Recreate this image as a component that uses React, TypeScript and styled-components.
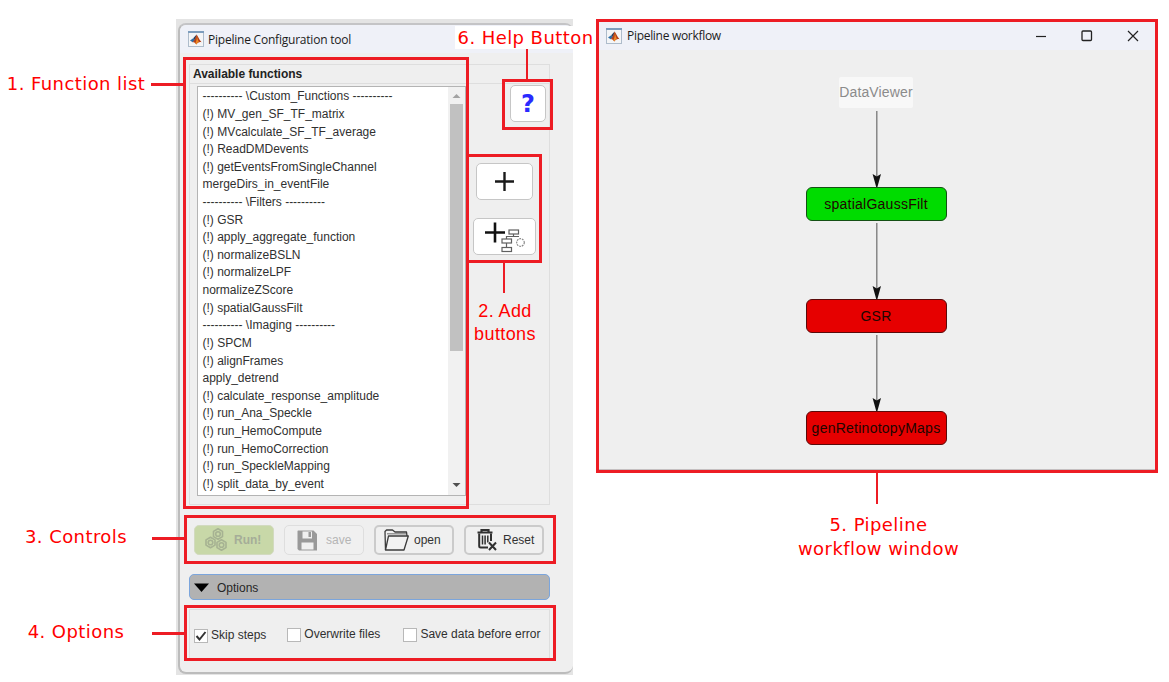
import React from "react";
import styled, { createGlobalStyle } from "styled-components";

const GlobalStyle = createGlobalStyle`
  * { box-sizing: border-box; }
  body { margin: 0; background: #fff; overflow: hidden; }
`;

const sans = `"Liberation Sans", Arial, sans-serif`;
const ui = `"Open Sans", "Noto Sans", sans-serif`;
const wide = `"DejaVu Sans", Verdana, sans-serif`;
const red = "#ed1c24";

const Desktop = styled.main`
  position: relative;
  width: 1169px;
  height: 682px;
  background: #fff;
  overflow: hidden;
  font-family: ${sans};
  color: #303030;
`;

const ToolBackdrop = styled.div`
  position: absolute;
  left: 176px;
  top: 19px;
  width: 397px;
  height: 656px;
  background: #e4e4e4;
  overflow: hidden;
  padding: 4px 0 1px 2px;
`;

const ToolWindow = styled.section`
  width: 395px;
  height: 651px;
  border: 2px solid #bcbcbc;
  border-right-width: 0;
  border-top-color: #c4c4c6;
  border-radius: 8px;
  background: #efefef;
  overflow: hidden;
`;

const TitleBar = styled.header<{ $height: number; $pad: number }>`
  display: flex;
  align-items: center;
  height: ${(p) => p.$height}px;
  padding-left: ${(p) => p.$pad}px;
  background: #eff1f8;
  font: 12px/16px ${ui};
  color: #1c1c1c;
`;

const TitleText = styled.span<{ $spacing: number; $gap: number }>`
  margin-left: ${(p) => p.$gap}px;
  padding-top: 1px;
  white-space: nowrap;
  letter-spacing: ${(p) => p.$spacing}px;
`;

const ToolBody = styled.div`
  display: flex;
  flex-direction: column;
  padding: 11px 0 0 9px;
`;

const FunctionPanel = styled.div`
  display: flex;
  flex-direction: column;
  width: 361px;
  height: 441px;
  border: 1px solid #dedede;
`;

const PanelTitle = styled.h2`
  margin: 0;
  height: 19px;
  padding-left: 3px;
  border-bottom: 1px solid #dedede;
  font: bold 12px/18px ${sans};
  letter-spacing: -0.02px;
  color: #222;
`;

const PanelBody = styled.div`
  display: flex;
  padding: 2px 0 0 7px;
`;

const ListBox = styled.div`
  display: flex;
  width: 269px;
  height: 410px;
  border: 1px solid #b4b4b4;
  background: #fff;
`;

const FunctionItems = styled.ul`
  flex: 1;
  margin: 0;
  padding: 1.4px 0 0 4.5px;
  list-style: none;
  overflow: hidden;
`;

const FunctionItem = styled.li`
  height: 17.62px;
  font-size: 12px;
  line-height: 17.62px;
  white-space: nowrap;
`;

const ScrollTrack = styled.div`
  display: flex;
  flex-direction: column;
  align-items: center;
  width: 17px;
  background: #f1f1f1;
`;

const ScrollArrow = styled.svg`
  display: block;
  width: 17px;
  height: 17px;
`;

const ScrollThumb = styled.div`
  width: 13px;
  height: 247px;
  margin-bottom: auto;
  background: #c1c1c1;
`;

const SideColumn = styled.div`
  display: flex;
  flex-direction: column;
  width: 82px;
  align-items: flex-start;
`;

const IconButton = styled.button<{ $w: number; $h: number; $left: number; $top?: number }>`
  display: flex;
  align-items: center;
  justify-content: center;
  width: ${(p) => p.$w}px;
  height: ${(p) => p.$h}px;
  margin: ${(p) => p.$top ?? 0}px 0 0 ${(p) => p.$left}px;
  padding: 0;
  border: 1.5px solid #c6c6c6;
  border-radius: 5px;
  background: #fff;
`;

const HelpMark = styled.span`
  font: 600 25px/30px ${wide};
  font-size: 24px;
  color: #2a2aff;
`;

const Controls = styled.div`
  display: flex;
  gap: 10px;
  margin-top: 20px;
  padding-left: 5px;
`;

const ControlButton = styled.button<{ $tone?: "run" | "off"; $gap: number; $pad: number }>`
  display: flex;
  align-items: center;
  gap: ${(p) => p.$gap}px;
  width: 80px;
  height: 30px;
  padding: 0 0 0 ${(p) => p.$pad}px;
  border: ${(p) => (p.$tone === "off" ? "1.5px solid #dedede" : p.$tone === "run" ? "1px solid #d2dabf" : "2px solid #cbcbcb")};
  border-radius: 5px;
  background: ${(p) => (p.$tone === "run" ? "#c8d8a8" : "#f0f0f0")};
  color: ${(p) => (p.$tone === "run" ? "#a5ad98" : p.$tone === "off" ? "#b5b5b5" : "#333")};
  font: ${(p) => (p.$tone === "run" ? "bold" : "normal")} 12px/16px ${sans};
  white-space: nowrap;
  svg { display: block; flex: none; }
`;

const OptionsHeader = styled.button`
  display: flex;
  align-items: center;
  gap: 8px;
  width: 361px;
  height: 26px;
  margin-top: 19px;
  padding: 1px 0 0 4px;
  border: 1.5px solid #7ba5dc;
  border-radius: 5px;
  background: #b2b2b2;
  font: 12px/16px ${sans};
  color: #262626;
`;

const OptionsPanel = styled.div`
  display: flex;
  align-items: center;
  width: 361px;
  height: 51px;
  margin-top: 9px;
  padding-left: 4px;
  border: 1px solid #dedede;
`;

const Option = styled.label<{ $left?: number; $drop?: number }>`
  display: flex;
  align-items: center;
  gap: 3px;
  margin-left: ${(p) => p.$left ?? 0}px;
  padding-top: ${(p) => p.$drop ?? 0}px;
  font-size: 12px;
  line-height: 15px;
  white-space: nowrap;
`;

const Box = styled.span`
  display: flex;
  align-items: center;
  justify-content: center;
  width: 14px;
  height: 14px;
  border: 1px solid #b8b8b8;
  background: #fff;
`;

const WorkflowWindow = styled.section`
  position: absolute;
  left: 598px;
  top: 21px;
  width: 558px;
  height: 450px;
  background: #efefef;
  border-bottom: 2px solid #c4bfc0;
`;

const WindowButtons = styled.div`
  display: flex;
  gap: 34px;
  margin-left: auto;
  padding-right: 17px;
`;

const Diagram = styled.div`
  display: flex;
  flex-direction: column;
  align-items: center;
  padding: 27px 2px 0 0;
`;

const Source = styled.div`
  width: 74px;
  height: 31px;
  margin-bottom: 3px;
  border-radius: 2px;
  background: #f8f8f8;
  color: #8b8b8b;
  text-align: center;
  font-size: 14px;
  line-height: 31px;
  letter-spacing: 0.15px;
`;

const Node = styled.div<{ $color: string; $ink: string }>`
  width: 141px;
  height: 34px;
  margin-bottom: 2px;
  border: 1px solid ${(p) => p.$ink};
  border-radius: 6px;
  background: ${(p) => p.$color};
  color: #200600;
  text-align: center;
  font-size: 14px;
  line-height: 33px;
  letter-spacing: 0.25px;
`;

const Frame = styled.div<{ $x: number; $y: number; $w: number; $h: number }>`
  position: absolute;
  left: ${(p) => p.$x}px;
  top: ${(p) => p.$y}px;
  width: ${(p) => p.$w}px;
  height: ${(p) => p.$h}px;
  border: 3px solid ${red};
`;

const Leader = styled.div<{ $x: number; $y: number; $w: number; $h: number }>`
  position: absolute;
  left: ${(p) => p.$x}px;
  top: ${(p) => p.$y}px;
  width: ${(p) => p.$w}px;
  height: ${(p) => p.$h}px;
  background: ${red};
`;

const Note = styled.div<{ $x: number; $y: number; $w: number; $line?: number; $plain?: boolean; $fill?: boolean }>`
  position: absolute;
  left: ${(p) => p.$x}px;
  top: ${(p) => p.$y}px;
  width: ${(p) => p.$w}px;
  text-align: center;
  white-space: nowrap;
  color: #ff0000;
  background: ${(p) => (p.$fill ? "#fff" : "transparent")};
  font: 18px/${(p) => p.$line ?? 22}px ${(p) => (p.$plain ? sans : wide)};
  letter-spacing: ${(p) => (p.$plain ? 0.4 : 0.43)}px;
`;

const functions = [
  "---------- \\Custom_Functions ----------",
  "(!) MV_gen_SF_TF_matrix",
  "(!) MVcalculate_SF_TF_average",
  "(!) ReadDMDevents",
  "(!) getEventsFromSingleChannel",
  "mergeDirs_in_eventFile",
  "---------- \\Filters ----------",
  "(!) GSR",
  "(!) apply_aggregate_function",
  "(!) normalizeBSLN",
  "(!) normalizeLPF",
  "normalizeZScore",
  "(!) spatialGaussFilt",
  "---------- \\Imaging ----------",
  "(!) SPCM",
  "(!) alignFrames",
  "apply_detrend",
  "(!) calculate_response_amplitude",
  "(!) run_Ana_Speckle",
  "(!) run_HemoCompute",
  "(!) run_HemoCorrection",
  "(!) run_SpeckleMapping",
  "(!) split_data_by_event",
];

const AppIcon = () => (
  <svg width="16" height="16" viewBox="0 0 16 16">
    <rect x="0.5" y="0.5" width="15" height="15" fill="#f4f5f7" stroke="#aebccb" />
    <path d="M0 1h16" stroke="#7d9dbd" strokeWidth="2" />
    <path d="M2 9.5L5.2 7.3 7.2 9.2 4.6 11.3z" fill="#2e6fa8" />
    <path d="M5.2 7.3L8.6 3.6 7.2 9.2z" fill="#26415f" />
    <path d="M8.6 3.6C10 5 10.8 8.6 13.6 11.2 11.4 10.4 9.7 11.4 8.2 13.4 7.2 11.8 6.2 11.2 4.6 11.3 7 9.4 7.6 6 8.6 3.6z" fill="#b3401b" />
    <path d="M8.8 4.5C8.9 7.5 8.5 10 7.4 12l.8 1.4c1-1.4 1.8-2.2 2.6-2.6C9.8 9 9.2 6.5 8.8 4.5z" fill="#f08a24" />
  </svg>
);

const PlusIcon = () => (
  <svg width="20" height="20" viewBox="0 0 20 20">
    <path d="M0 9.500h19M9.500 0v19" stroke="#1a1a1a" strokeWidth="2.4" />
  </svg>
);

const PlusPipelineIcon = () => (
  <svg width="42" height="32" viewBox="0 0 42 32">
    <path d="M1 11.5h20M11 1.5v20" stroke="#111" strokeWidth="2.6" />
    <g fill="#fff" stroke="#606060" strokeWidth="1.2">
      <path d="M29.5 13v2.5M22.5 18v-2.5h12.5M22.5 22v5" fill="none" />
      <rect x="25" y="9" width="9.5" height="4" />
      <rect x="18" y="18" width="9.5" height="4" />
      <rect x="18" y="26.5" width="9.5" height="4" />
      <circle cx="36.5" cy="21.5" r="3.8" stroke="#8a8a8a" strokeDasharray="1.8 0.9" />
    </g>
  </svg>
);

const hex = (cx: number, cy: number, r: number) =>
  Array.from({ length: 6 }, (_, i) => {
    const a = (Math.PI / 3) * i + Math.PI / 6;
    return `${(cx + r * Math.cos(a)).toFixed(2)},${(cy + r * Math.sin(a)).toFixed(2)}`;
  }).join(" ");

const GearsIcon = () => (
  <svg width="23" height="24" viewBox="0 0 23 24" fill="none" stroke="#a6b292" strokeWidth="1.6">
    {[[13, 6], [5.5, 14.5], [16.5, 17]].map(([x, y]) => (
      <g key={x}>
        <polygon points={hex(x, y, 5.2)} strokeLinejoin="round" />
        <circle cx={x} cy={y} r="2.3" />
      </g>
    ))}
  </svg>
);

const SaveIcon = () => (
  <svg width="21" height="21" viewBox="0 0 21 21">
    <path d="M1 .5h15.5L20 4v16.500H2L.5 19V1z" fill="#999" />
    <path d="M5.500 1.500h9.500v7H5.500zM4.500 12.500h12v7h-12z" fill="#f0f0f0" />
    <path d="M11.500 2h2.500v5h-2.500z" fill="#999" />
  </svg>
);

const FolderIcon = () => (
  <svg width="25" height="22" viewBox="0 0 25 22" fill="none" stroke="#3b3b3b" strokeWidth="1.3" strokeLinejoin="round">
    <path d="M1.500 21L1 2.500 2.500 1h6L11 3h11.500l.5 4" />
    <path d="M3 4.800h19" stroke="#888" />
    <path d="M1.500 21L4.500 7H24.300L20 21z" fill="#f2f2f2" />
  </svg>
);

const TrashIcon = () => (
  <svg width="20" height="22" viewBox="0 0 20 22" fill="none" stroke="#303030">
    <path d="M.5 3.500h15M4.500 3V1h7v2" strokeWidth="2.2" />
    <path d="M2.200 4.500v12.500q0 1.500 1.500 1.500H11M14 4.500V12" strokeWidth="2" />
    <path d="M5.500 6.500v9M8.100 6.500v9M10.800 6.500v7" strokeWidth="1.500" />
    <path d="M12 13.500l7 7.500M19 13.500L12 21" strokeWidth="2" />
  </svg>
);

const Arrow = () => (
  <svg width="11" height="76" viewBox="0 0 11 76" display="block">
    <path d="M5.800 0v70" stroke="#777" strokeWidth="1.3" />
    <path d="M1.600 63l4.200 2.500L10 63 6.400 76H5.200z" fill="#111" />
  </svg>
);

export default function App() {
  return (
    <Desktop>
      <GlobalStyle />
      <ToolBackdrop>
        <ToolWindow>
          <TitleBar $height={28} $pad={8}>
            <AppIcon />
            <TitleText $spacing={-0.22} $gap={4}>Pipeline Configuration tool</TitleText>
          </TitleBar>
          <ToolBody>
            <FunctionPanel>
              <PanelTitle>Available functions</PanelTitle>
              <PanelBody>
                <ListBox>
                  <FunctionItems>
                    {functions.map((name) => (
                      <FunctionItem key={name}>{name}</FunctionItem>
                    ))}
                  </FunctionItems>
                  <ScrollTrack>
                    <ScrollArrow viewBox="0 0 17 17"><path d="M4.5 11h8L8.5 7z" fill="#a3a3a3" /></ScrollArrow>
                    <ScrollThumb />
                    <ScrollArrow viewBox="0 0 17 17"><path d="M4.5 5h8l-4 4z" fill="#505050" /></ScrollArrow>
                  </ScrollTrack>
                </ListBox>
                <SideColumn>
                  <IconButton $w={36} $h={37} $left={44} $top={-1}><HelpMark>?</HelpMark></IconButton>
                  <IconButton $w={57} $h={37} $left={10} $top={41}><PlusIcon /></IconButton>
                  <IconButton $w={63} $h={37} $left={7} $top={18}><PlusPipelineIcon /></IconButton>
                </SideColumn>
              </PanelBody>
            </FunctionPanel>
            <Controls>
              <ControlButton $tone="run" $gap={6} $pad={10}><GearsIcon />Run!</ControlButton>
              <ControlButton $tone="off" $gap={8} $pad={12}><SaveIcon />save</ControlButton>
              <ControlButton $gap={5} $pad={8}><FolderIcon />open</ControlButton>
              <ControlButton $gap={6} $pad={11}><TrashIcon />Reset</ControlButton>
            </Controls>
            <OptionsHeader>
              <svg width="15" height="9" viewBox="0 0 15 9"><path d="M0 .5h15L7.5 9z" fill="#000" /></svg>
              Options
            </OptionsHeader>
            <OptionsPanel>
              <Option $drop={2}>
                <Box>
                  <svg width="12" height="12" viewBox="0 0 12 12"><path d="M1.5 6l3 3.500L10.5 2" fill="none" stroke="#333" strokeWidth="2" /></svg>
                </Box>
                Skip steps
              </Option>
              <Option $left={21}><Box />Overwrite files</Option>
              <Option $left={23}><Box />Save data before error</Option>
            </OptionsPanel>
          </ToolBody>
        </ToolWindow>
      </ToolBackdrop>

      <WorkflowWindow>
        <TitleBar $height={29} $pad={8}>
          <AppIcon />
          <TitleText $spacing={-0.3} $gap={5}>Pipeline workflow</TitleText>
          <WindowButtons>
            <svg width="12" height="12" viewBox="0 0 12 12"><path d="M1 6.5h10" stroke="#222" strokeWidth="1.2" /></svg>
            <svg width="12" height="12" viewBox="0 0 12 12"><rect x="1" y="1" width="9.5" height="9.5" rx="1" fill="none" stroke="#222" strokeWidth="1.3" /></svg>
            <svg width="12" height="12" viewBox="0 0 12 12"><path d="M1 1l10 10M11 1L1 11" stroke="#222" strokeWidth="1.2" /></svg>
          </WindowButtons>
        </TitleBar>
        <Diagram>
          <Source>DataViewer</Source>
          <Arrow />
          <Node $color="#00dc00" $ink="#145014">spatialGaussFilt</Node>
          <Arrow />
          <Node $color="#e60000" $ink="#5a0a0a">GSR</Node>
          <Arrow />
          <Node $color="#e60000" $ink="#5a0a0a">genRetinotopyMaps</Node>
        </Diagram>
      </WorkflowWindow>

      <Frame $x={183} $y={57} $w={286} $h={452} />
      <Frame $x={502} $y={79} $w={51} $h={51} />
      <Frame $x={466} $y={154} $w={76} $h={109} />
      <Frame $x={184} $y={515} $w={372} $h={49} />
      <Frame $x={184} $y={605} $w={372} $h={56} />
      <Frame $x={596} $y={19} $w={562} $h={454} />

      <Leader $x={151} $y={83} $w={34} $h={3} />
      <Leader $x={152} $y={537} $w={34} $h={3} />
      <Leader $x={152} $y={632} $w={34} $h={3} />
      <Leader $x={503} $y={262} $w={2} $h={31} />
      <Leader $x={526} $y={46} $w={2} $h={34} />
      <Leader $x={876} $y={473} $w={2} $h={31} />

      <Note $x={5} $y={73} $w={142}>1. Function list</Note>
      <Note $x={473} $y={300} $w={64} $line={23} $plain>2. Add<br />buttons</Note>
      <Note $x={20} $y={526} $w={112}>3. Controls</Note>
      <Note $x={20} $y={621} $w={112}>4. Options</Note>
      <Note $x={795} $y={513} $w={167} $line={24}>5. Pipeline<br />workflow window</Note>
      <Note $x={455} $y={26} $w={141} $line={23} $fill>6. Help Button</Note>
    </Desktop>
  );
}
